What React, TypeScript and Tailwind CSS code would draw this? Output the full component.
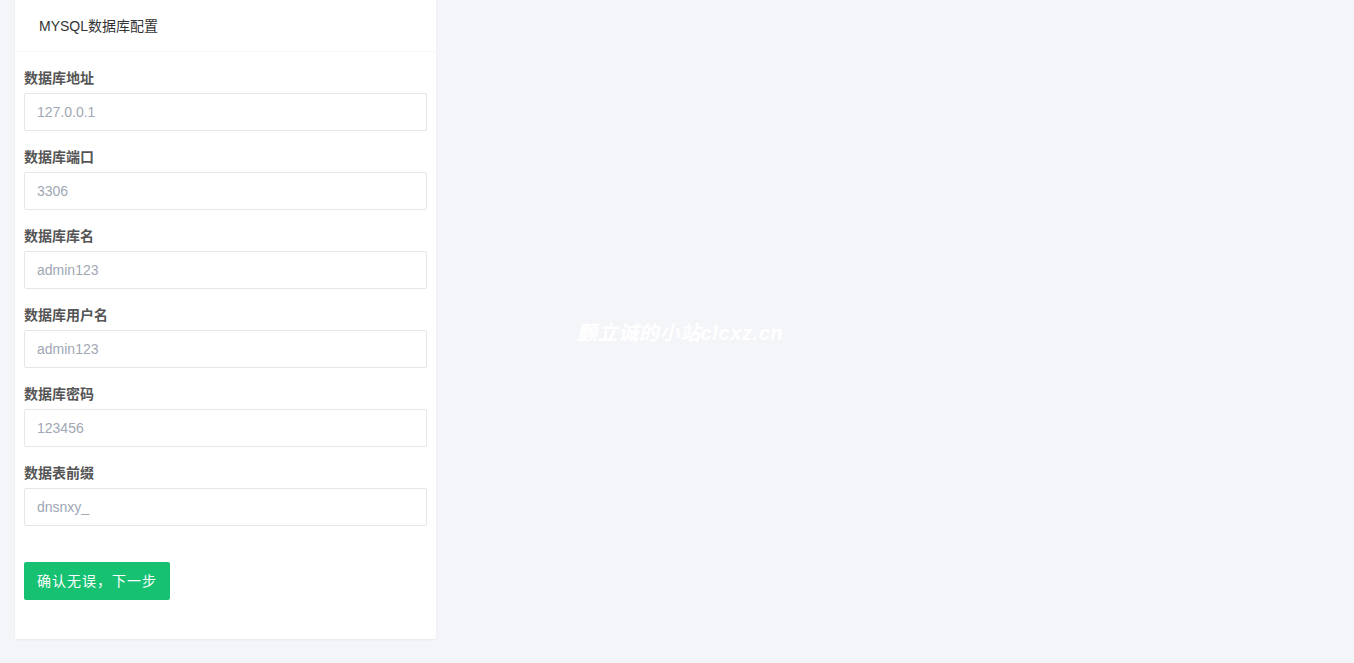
const fields = [
  { label: "数据库地址", value: "127.0.0.1" },
  { label: "数据库端口", value: "3306" },
  { label: "数据库库名", value: "admin123" },
  { label: "数据库用户名", value: "admin123" },
  { label: "数据库密码", value: "123456" },
  { label: "数据表前缀", value: "dnsnxy_" },
];

const font = { fontFamily: '"Helvetica Neue", "Liberation Sans", "Noto Sans CJK SC", sans-serif' };

const App = () => {
  return (
    <div
      className="relative h-[663px] w-full overflow-hidden bg-[#f4f5f9] text-sm"
      style={font}
    >
      <div className="ml-[15px] w-[421px] bg-white shadow-[0_1px_2px_rgba(0,0,0,0.05)]">
        <div className="flex h-[52px] items-center border-b border-[#f6f6f6] pl-6 text-[#333]">
          MYSQL数据库配置
        </div>
        <div className="px-[9px] pt-[15px] pb-[39px]">
          {fields.map((f) => (
            <div key={f.label} className="mb-[15px]">
              <div className="mb-[4px] h-[22px] leading-[22px] font-bold text-[#555]">
                {f.label}
              </div>
              <input
                placeholder={f.value}
                className="block h-[38px] w-full rounded-[2px] border border-[#e6e6e6] px-3 text-[#333] outline-none placeholder:text-[#a0a7b4]"
                style={font}
              />
            </div>
          ))}
          <button
            className="mt-[21px] h-[38px] w-[146px] rounded-[2px] bg-[#16c172] pl-[13px] text-left tracking-[1px] text-white"
            style={font}
          >
            确认无误，下一步
          </button>
        </div>
      </div>
      <div className="absolute left-[577px] top-[320px] text-[20px] italic font-semibold leading-[26px] tracking-[0.6px] text-white">
        颤立诚的小站clcxz.cn
      </div>
    </div>
  );
};

export default App;
